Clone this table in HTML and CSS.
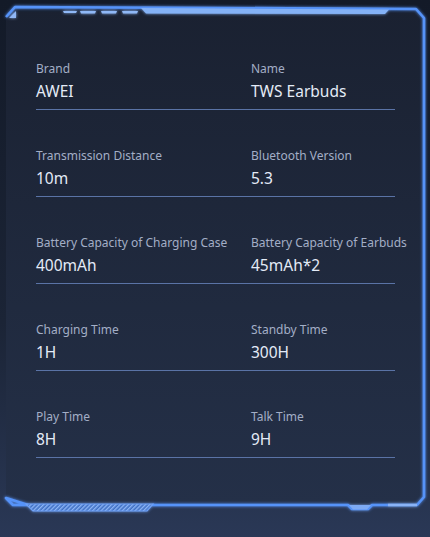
FILE: index.html
```html
<!DOCTYPE html>
<html>
<head>
<meta charset="utf-8">
<link rel="stylesheet" href="styles.css">
</head>
<body>
<div class="stage">
  <svg class="frame" width="430" height="537" viewBox="0 0 430 537">
    <defs>
      <linearGradient id="panelGrad" x1="0" y1="0" x2="0" y2="1">
        <stop offset="0" stop-color="#1a2131"/>
        <stop offset="1" stop-color="#243048"/>
      </linearGradient>
      <pattern id="hatch" width="3" height="3" patternUnits="userSpaceOnUse" patternTransform="rotate(45)">
        <rect width="3" height="3" fill="#3f6fc4"/>
        <rect width="1.4" height="3" fill="#8db5f5"/>
      </pattern>
      <filter id="glow" x="-10%" y="-10%" width="120%" height="120%">
        <feGaussianBlur stdDeviation="1.8" result="b"/>
        <feMerge><feMergeNode in="b"/><feMergeNode in="SourceGraphic"/></feMerge>
      </filter>
    </defs>
    <path d="M6,17 L15,7 L416,9 L424,18 L424,497 L417,505 L13,505 L6,498 Z" fill="url(#panelGrad)"/>
    <g filter="url(#glow)">
      <path d="M6,17 L15,7 L416,9 L424,18 L424,497 L417,505 L372,505 L368,509 L352,509 L348,505 L152,505 M28,505 L13,505 L6,498 Z" fill="none" stroke="#5693f8" stroke-width="2.6" stroke-linejoin="round"/>
      <polygon points="141,8 389,9.5 385,14 146,13.5" fill="#84b2f6"/>
      <polygon points="63,11 77,11 76,13 64,13" fill="#8fb8f6"/>
      <polygon points="80,11 96,11 95,13.5 81,13.5" fill="#8fb8f6"/>
      <polygon points="101,11 117,11 116,13.5 102,13.5" fill="#8fb8f6"/>
      <polygon points="122,11 138,11 137,13.5 123,13.5" fill="#8fb8f6"/>
      <polygon points="9,18 16,11 16,18" fill="#8fb6f5"/>
      <polygon points="26,504 153,504 147,511 33,511" fill="url(#hatch)" stroke="#6ea0f5" stroke-width="1.2"/>
      <polygon points="349,505 371,505 367,509.5 353,509.5" fill="#7eaaf3"/>
      <line x1="388" y1="505" x2="417" y2="505" stroke="#8ab3f6" stroke-width="2.5"/>
    </g>
  </svg>

  <main class="specs">
    <section class="row">
      <div class="cell"><div class="label">Brand</div><div class="value">AWEI</div></div>
      <div class="cell"><div class="label">Name</div><div class="value">TWS Earbuds</div></div>
    </section>
    <section class="row">
      <div class="cell"><div class="label">Transmission Distance</div><div class="value">10m</div></div>
      <div class="cell"><div class="label">Bluetooth Version</div><div class="value">5.3</div></div>
    </section>
    <section class="row">
      <div class="cell"><div class="label">Battery Capacity of Charging Case</div><div class="value">400mAh</div></div>
      <div class="cell"><div class="label">Battery Capacity of Earbuds</div><div class="value">45mAh*2</div></div>
    </section>
    <section class="row">
      <div class="cell"><div class="label">Charging Time</div><div class="value">1H</div></div>
      <div class="cell"><div class="label">Standby Time</div><div class="value">300H</div></div>
    </section>
    <section class="row">
      <div class="cell"><div class="label">Play Time</div><div class="value">8H</div></div>
      <div class="cell"><div class="label">Talk Time</div><div class="value">9H</div></div>
    </section>
  </main>
</div>
</body>
</html>
```
FILE: styles.css
```css
html, body {
  margin: 0;
  padding: 0;
}
body {
  width: 430px;
  height: 537px;
  overflow: hidden;
  background: linear-gradient(180deg, #131a28 0%, #1b2436 60%, #2a3856 100%);
  font-family: "Noto Sans", "Open Sans", sans-serif;
}
.stage {
  position: relative;
  width: 430px;
  height: 537px;
}
.frame {
  position: absolute;
  left: 0;
  top: 0;
}
.specs {
  position: relative;
  z-index: 1;
  margin: 0 35px 0 36px;
  padding-top: 61px;
}
.row {
  display: grid;
  grid-template-columns: 215px 1fr;
  padding-bottom: 8px;
  margin-bottom: 38px;
  border-bottom: 1px solid #5a73a6;
}
.label {
  font-size: 12px;
  line-height: 16px;
  color: #a3aec6;
  white-space: nowrap;
}
.value {
  margin-top: 4px;
  font-size: 15.5px;
  line-height: 20px;
  color: #e4ebf7;
  white-space: nowrap;
}
```
